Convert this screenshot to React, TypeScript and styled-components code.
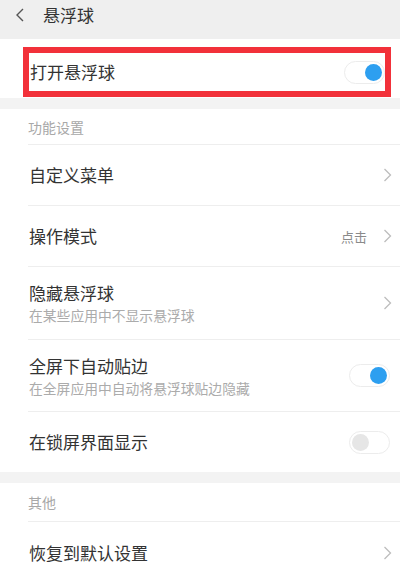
import * as React from 'react';
import styled, { createGlobalStyle } from 'styled-components';

const GlobalStyle = createGlobalStyle`
  html, body {
    margin: 0;
    padding: 0;
    background: #ffffff;
  }
  body {
    font-family: "Noto Sans CJK SC", "Noto Sans", sans-serif;
    color: #333333;
  }
`;

const Page = styled.div`
  width: 400px;
  height: 576px;
  overflow: hidden;
  background: #ffffff;
`;

const TopBar = styled.div`
  height: 39px;
  background: #efefef;
  display: flex;
  align-items: flex-start;
  padding-top: 3px;
  box-sizing: border-box;
`;

const BackButton = styled.div`
  width: 43px;
  height: 24px;
  display: flex;
  align-items: center;
  padding-left: 15px;
  box-sizing: border-box;
`;

const Title = styled.div`
  font-size: 17px;
  line-height: 24px;
  color: #333333;
`;

const Section = styled.div`
  background: #ffffff;
`;

const TopSection = styled.div`
  background: #ffffff;
  padding: 8px 9px 1px 23px;
`;

const Highlight = styled.div`
  border: 6px solid #f2313a;
  height: 50px;
  box-sizing: border-box;
  display: flex;
  align-items: center;
  padding-left: 1px;
  padding-right: 0;
`;

const Gap = styled.div`
  height: 11px;
  background: #f3f3f3;
`;

const SectionHeader = styled.div<{ $h: number }>`
  margin-left: 28px;
  height: ${p => p.$h}px;
  box-sizing: border-box;
  border-bottom: 1px solid #eeeeee;
  display: flex;
  align-items: center;
  font-size: 14px;
  color: #a8a8a8;
`;

const Row = styled.div<{ $h: number; $last?: boolean }>`
  margin-left: 28px;
  height: ${p => p.$h}px;
  box-sizing: border-box;
  border-bottom: ${p => (p.$last ? 'none' : '1px solid #eeeeee')};
  display: flex;
  align-items: center;
  padding-left: 1px;
  padding-right: 10px;
`;

const Texts = styled.div`
  flex: 1;
  display: flex;
  flex-direction: column;
  gap: 2px;
`;

const Label = styled.div`
  font-size: 17px;
  line-height: 22px;
  color: #333333;
`;

const Sub = styled.div`
  font-size: 13.8px;
  line-height: 18px;
  color: #ababab;
`;

const Value = styled.div`
  font-size: 13px;
  color: #8a8a8a;
  margin-right: 16px;
`;

const Track = styled.div<{ $on: boolean }>`
  width: 41px;
  height: 23px;
  box-sizing: border-box;
  border-radius: 12px;
  border: 1px solid #ececec;
  background: #ffffff;
  display: flex;
  align-items: center;
  justify-content: ${p => (p.$on ? 'flex-end' : 'flex-start')};
  padding: 0 2px;
`;

const Knob = styled.div<{ $on: boolean }>`
  width: 17px;
  height: 17px;
  border-radius: 50%;
  background: ${p => (p.$on ? '#2d9ff0' : '#e6e6e6')};
`;

const Chevron = () => (
  <svg width="9" height="14" viewBox="0 0 9 14" style={{ marginRight: -2 }}>
    <path d="M1.5 1 L7.5 7 L1.5 13" fill="none" stroke="#bdbdbd" strokeWidth="1.3" />
  </svg>
);

const BackIcon = () => (
  <svg width="10" height="14" viewBox="0 0 10 14">
    <path d="M8 1 L2 7 L8 13" fill="none" stroke="#555555" strokeWidth="1.4" />
  </svg>
);

const Switch: React.FC<{ on: boolean }> = ({ on }) => (
  <Track $on={on}>
    <Knob $on={on} />
  </Track>
);

export default function App() {
  return (
    <Page>
      <GlobalStyle />
      <TopBar>
        <BackButton>
          <BackIcon />
        </BackButton>
        <Title>悬浮球</Title>
      </TopBar>

      <TopSection>
        <Highlight>
          <Label style={{ flex: 1 }}>打开悬浮球</Label>
          <Switch on />
        </Highlight>
      </TopSection>

      <Gap />

      <Section>
        <SectionHeader $h={36}>功能设置</SectionHeader>
        <Row $h={61}>
          <Texts>
            <Label>自定义菜单</Label>
          </Texts>
          <Chevron />
        </Row>
        <Row $h={61}>
          <Texts>
            <Label>操作模式</Label>
          </Texts>
          <Value>点击</Value>
          <Chevron />
        </Row>
        <Row $h={73}>
          <Texts>
            <Label>隐藏悬浮球</Label>
            <Sub>在某些应用中不显示悬浮球</Sub>
          </Texts>
          <Chevron />
        </Row>
        <Row $h={72}>
          <Texts>
            <Label>全屏下自动贴边</Label>
            <Sub>在全屏应用中自动将悬浮球贴边隐藏</Sub>
          </Texts>
          <Switch on />
        </Row>
        <Row $h={60} $last>
          <Texts>
            <Label>在锁屏界面显示</Label>
          </Texts>
          <Switch on={false} />
        </Row>
      </Section>

      <Gap />

      <Section>
        <SectionHeader $h={39}>其他</SectionHeader>
        <Row $h={61} $last>
          <Texts>
            <Label>恢复到默认设置</Label>
          </Texts>
          <Chevron />
        </Row>
      </Section>
    </Page>
  );
}
